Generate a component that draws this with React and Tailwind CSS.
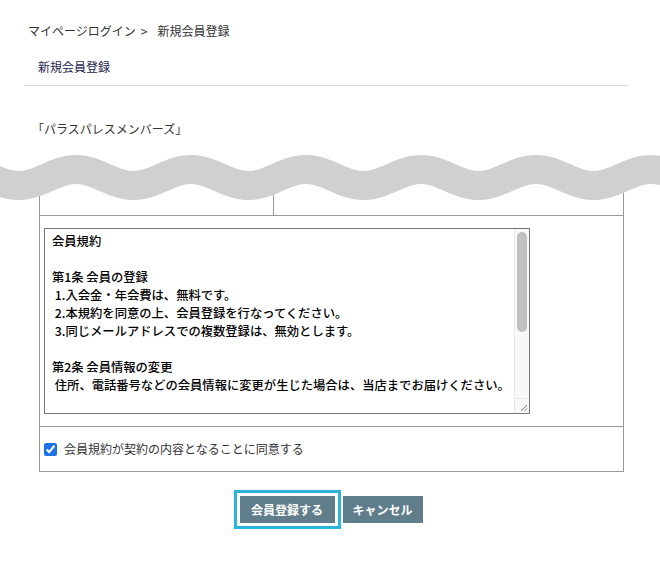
import { useState } from "react";

const TERMS = `会員規約

第1条 会員の登録
 1.入会金・年会費は、無料です。
 2.本規約を同意の上、会員登録を行なってください。
 3.同じメールアドレスでの複数登録は、無効とします。

第2条 会員情報の変更
 住所、電話番号などの会員情報に変更が生じた場合は、当店までお届けください。

第3条 退会
 退会を希望される場合は、当店までご連絡ください。

第4条 個人情報の取り扱い
 お預かりした個人情報は、当店の個人情報保護方針に基づき
 適切に管理いたします。

第5条 規約の変更
 当店は、必要に応じて本規約を変更できるものとします。`;

const wavePoints = () => {
  const pts = [];
  for (let x = -10; x <= 670; x += 2) {
    const y = 27.5 - 8 * Math.cos((2 * Math.PI * (x - 76)) / 115);
    pts.push(`${x},${y.toFixed(2)}`);
  }
  return pts;
};

const Wave = () => {
  const pts = wavePoints();
  return (
    <svg
      className="absolute left-[-39px] top-0"
      width="660"
      height="60"
      viewBox="0 0 660 60"
    >
      <path d={`M-10,0 L${pts.join(" L")} L670,0 Z`} fill="#fff" />
      <polyline points={pts.join(" ")} fill="none" stroke="#d0d0d0" strokeWidth="29" />
    </svg>
  );
};

const TermsBox = () => (
  <div className="flex w-[486px] h-[186px] border border-[#767676] bg-white">
    <textarea
      readOnly
      value={TERMS}
      className="flex-1 resize-none overflow-hidden pl-[7px] pt-[3px] text-[12.3px] leading-[18px] font-medium text-black font-['Noto_Sans_CJK_JP',sans-serif] outline-none"
    />
    <div className="flex w-[15px] flex-col border-l border-[#e8e8e8] bg-[#f8f8f8]">
      <div className="flex-1 px-[2px] pt-[3px]">
        <div className="h-[100px] rounded-full bg-[#c1c1c1]" />
      </div>
      <div className="h-[15px] border-t border-[#e8e8e8]">
        <svg width="14" height="14" viewBox="0 0 14 14">
          <path d="M12 6 L6 12 M12 9.5 L9.5 12" stroke="#777" strokeWidth="1" fill="none" />
        </svg>
      </div>
    </div>
  </div>
);

const App = () => {
  const [agree, setAgree] = useState(true);

  return (
    <div className="w-[660px] min-h-[563px] bg-white text-[12px] text-[#333] font-['Noto_Sans_CJK_JP',sans-serif] overflow-hidden">
      <div className="flex pt-[23px] pl-[28px] leading-[16px]">
        <span>マイページログイン</span>
        <span className="ml-[5px] mr-[10px]">&gt;</span>
        <span>新規会員登録</span>
      </div>

      <div className="mt-[20px] pl-[38px] leading-[16px] text-[#1c1c50]">
        新規会員登録
      </div>

      <div className="mt-[10px] ml-[24px] w-[604px] border-t border-[#ddd]" />

      <div className="mt-[35px] pl-[32px] leading-[16px]">「パラスパレスメンバーズ」</div>

      <div className="relative mt-[13px] ml-[39px] w-[585px]">
        <div className="flex h-[66px] border-x border-b border-[#999]">
          <div className="w-[234px] border-r border-[#999]" />
        </div>

        <div className="border-x border-b border-[#999] pl-[4px] py-[12px]">
          <TermsBox />
        </div>

        <label className="flex h-[45px] items-center border-x border-b border-[#999] pl-[4px]">
          <input
            type="checkbox"
            checked={agree}
            onChange={(e) => setAgree(e.target.checked)}
            className="m-0 w-[13px] h-[13px] accent-[#1a73e8]"
          />
          <span className="ml-[7px]">会員規約が契約の内容となることに同意する</span>
        </label>

        <Wave />
      </div>

      <div className="mt-[18px] flex justify-center items-center gap-[2px] pr-[4px]">
        <div className="border-[3px] border-[#2ab4dc] p-[3px]">
          <button className="block h-[27px] w-[95px] bg-[#607d8b] text-white font-bold text-[12px] leading-[27px]">
            会員登録する
          </button>
        </div>
        <button className="h-[27px] w-[80px] bg-[#607d8b] text-white font-bold text-[12px] leading-[27px]">
          キャンセル
        </button>
      </div>
    </div>
  );
};

export default App;
